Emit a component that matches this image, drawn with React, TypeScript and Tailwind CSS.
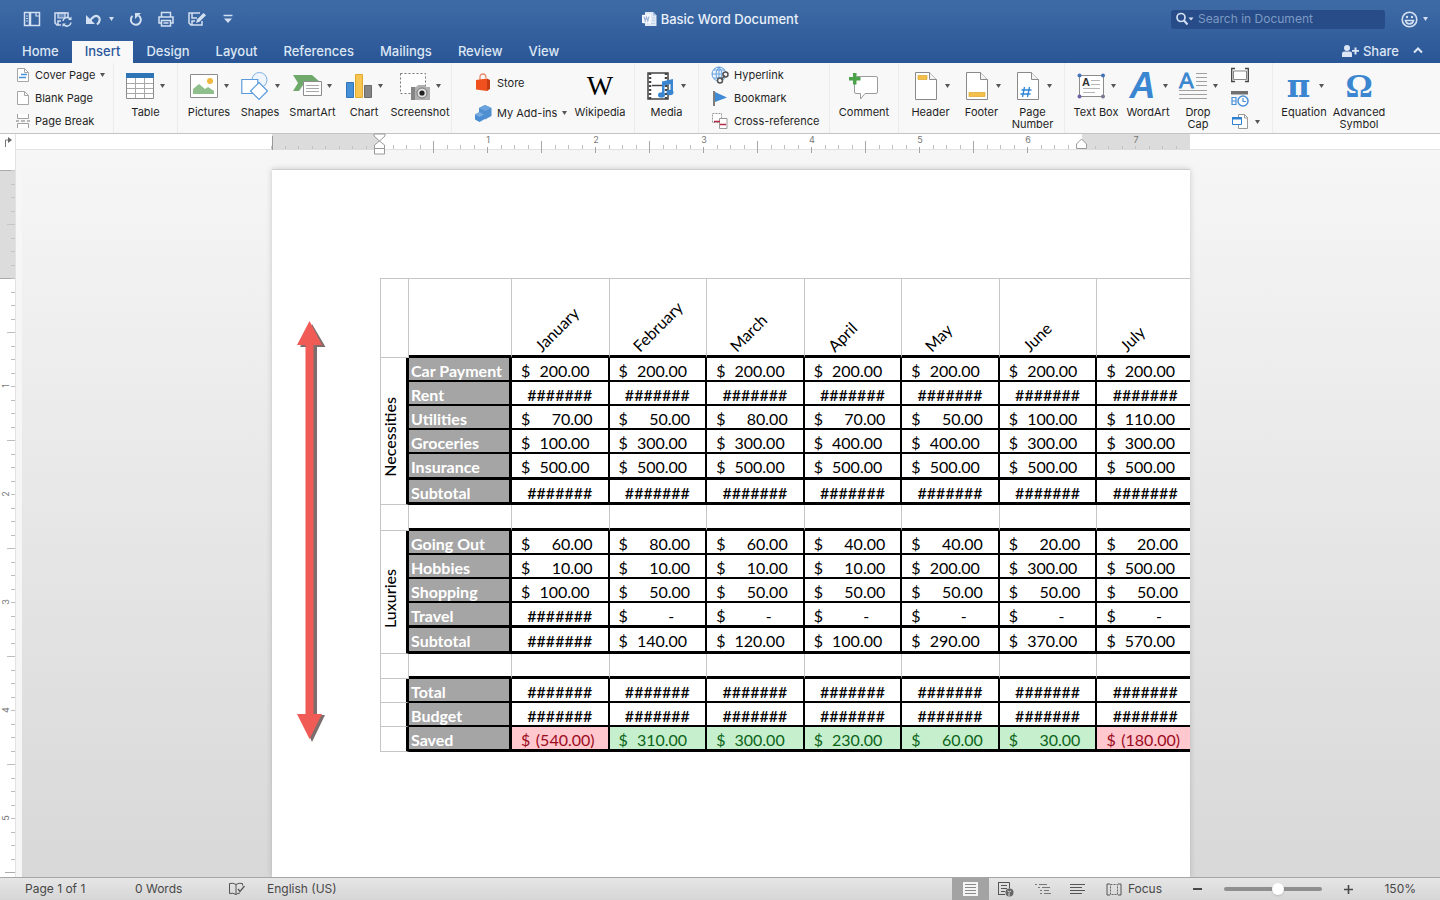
import React from "react";
import clsx from "clsx";

const MONTHS = ["January", "February", "March", "April", "May", "June", "July"];

type Kind = "item" | "last" | "subtotal" | "gap" | "saved";

interface Row {
  label: string;
  kind: Kind;
  values: string[];
  group?: string;
  span?: number;
  height: string;
}

const HASH = "#######";
const hashes = MONTHS.map(() => HASH);
const blanks = MONTHS.map(() => "");

const ROWS: Row[] = [
  { label: "Car Payment", kind: "item", group: "Necessities", span: 6, height: "h-[24px]", values: MONTHS.map(() => "200.00") },
  { label: "Rent", kind: "item", height: "h-[24px]", values: hashes },
  { label: "Utilities", kind: "item", height: "h-[24px]", values: ["70.00", "50.00", "80.00", "70.00", "50.00", "100.00", "110.00"] },
  { label: "Groceries", kind: "item", height: "h-[24px]", values: ["100.00", "300.00", "300.00", "400.00", "400.00", "300.00", "300.00"] },
  { label: "Insurance", kind: "last", height: "h-[26px]", values: MONTHS.map(() => "500.00") },
  { label: "Subtotal", kind: "subtotal", height: "h-[25px]", values: hashes },
  { label: "", kind: "gap", height: "h-[26px]", values: blanks },
  { label: "Going Out", kind: "item", group: "Luxuries", span: 5, height: "h-[24px]", values: ["60.00", "80.00", "60.00", "40.00", "40.00", "20.00", "20.00"] },
  { label: "Hobbies", kind: "item", height: "h-[24px]", values: ["10.00", "10.00", "10.00", "10.00", "200.00", "300.00", "500.00"] },
  { label: "Shopping", kind: "item", height: "h-[24px]", values: ["100.00", "50.00", "50.00", "50.00", "50.00", "50.00", "50.00"] },
  { label: "Travel", kind: "last", height: "h-[25px]", values: [HASH, "-", "-", "-", "-", "-", "-"] },
  { label: "Subtotal", kind: "subtotal", height: "h-[26px]", values: [HASH, "140.00", "120.00", "100.00", "290.00", "370.00", "570.00"] },
  { label: "", kind: "gap", height: "h-[25px]", values: blanks },
  { label: "Total", kind: "item", group: "", span: 1, height: "h-[24px]", values: hashes },
  { label: "Budget", kind: "item", group: "", span: 1, height: "h-[24px]", values: hashes },
  { label: "Saved", kind: "saved", group: "", span: 1, height: "h-[25px]", values: ["(540.00)", "310.00", "300.00", "230.00", "60.00", "30.00", "(180.00)"] },
];

const Caret = ({ className = "text-[#555]" }: { className?: string }) => (
  <svg width="5" height="4" viewBox="0 0 5 4" className={clsx("shrink-0", className)} aria-hidden="true">
    <path d="M0 0h5L2.5 4z" fill="currentColor" />
  </svg>
);

/* ---------- Title bar ---------- */

const QuickIcon = ({ label, width = 18, children }: { label: string; width?: number; children: React.ReactNode }) => (
  <button type="button" aria-label={label} className="flex h-5 items-center">
    <svg width={width} height="18" viewBox={`0 0 ${width} 18`} fill="none" stroke="currentColor" strokeWidth="1.5">
      {children}
    </svg>
  </button>
);

const TitleBar = () => (
  <div className="grid h-[38px] grid-cols-[1fr_auto_1fr] items-center">
    <div className="flex items-center pl-[23px] text-[#d3e0f2]">
      <QuickIcon label="Sidebar">
        <path d="M1.500 2.500h15v13h-15z" />
        <path d="M7 3v12" strokeWidth="2.500" />
        <path d="M3 6h2M3 8.500h2M3 11h2" strokeWidth="1.200" />
        <path d="M13 3v3h3" strokeWidth="1.200" />
      </QuickIcon>
      <div className="w-3" />
      <QuickIcon label="Save" width={20}>
        <path d="M8 15H4l-2-2V3h13v4" />
        <path d="M5 3h7v5H5z" fill="currentColor" fillOpacity=".35" strokeWidth="1.200" />
        <path d="M5 15v-4h3" />
        <path d="M10 11a4 4 0 0 1 7-2.200M18 12.500a4 4 0 0 1-7 2.200" />
        <path d="M18.500 6.500V10H15zM9.500 17v-3.500H13z" fill="currentColor" stroke="none" />
      </QuickIcon>
      <div className="w-3" />
      <QuickIcon label="Undo">
        <path d="M5 11c2-4 5.500-6 8-4.500s2.500 5-1 8" strokeWidth="2.200" />
        <path d="M1 5v9h9z" fill="currentColor" stroke="none" />
      </QuickIcon>
      <div className="w-[6px]" />
      <Caret className="text-[#d3e0f2]" />
      <div className="w-[12px]" />
      <QuickIcon label="Repeat">
        <path d="M6.500 6a5 5 0 1 0 6-.500" strokeWidth="2" />
        <path d="M9 9V3h6z" fill="currentColor" stroke="none" />
      </QuickIcon>
      <div className="w-[13px]" />
      <QuickIcon label="Print">
        <path d="M4.500 7V2.500h9V7M4.500 13H2V7h14v6h-2.500" />
        <path d="M4.500 10.500h9v5.500h-9z M6.500 13h5" />
      </QuickIcon>
      <div className="w-[12px]" />
      <QuickIcon label="Save a copy" width={20}>
        <path d="M15 11v4H4l-2-2V3h11M5 3v5h5M5 15v-4h3" />
        <path d="M9 13l1-3.500L16.500 3l2.500 2.200-6.500 6.600z" fill="currentColor" stroke="none" />
      </QuickIcon>
      <div className="w-[15px]" />
      <QuickIcon label="Customize" width={12}>
        <path d="M1.500 5.500h9" />
        <path d="M2 8.500h8L6 13z" fill="currentColor" stroke="none" />
      </QuickIcon>
    </div>

    <h1 className="flex items-center gap-1 text-[13px] leading-4 font-medium text-[#e9f0fa]">
      <svg width="15" height="16" viewBox="0 0 15 16" aria-hidden="true">
        <path d="M3 1h8l3.500 3.500V15H3z" fill="#dfe8f5" />
        <path d="M11 1v3.500h3.500z" fill="#a9bfdf" />
        <path d="M5 12.500h8M10 7h3M10 9.500h3" stroke="#c3d1e6" />
        <path d="M0 4l9-1v10l-9-1z" fill="#f5f8fd" />
        <path d="M2 5.500l1.200 4.500L4.500 6l1.300 4L7 5.500" fill="none" stroke="#9fb4d8" strokeWidth="1.100" />
      </svg>
      Basic Word Document
    </h1>

    <div className="flex items-center justify-end gap-4 pr-3 text-[#d3e0f2]">
      <label className="flex h-[19px] w-[214px] items-center gap-1 rounded-[3px] bg-[#274c87] pl-[5px]">
        <svg width="18" height="14" viewBox="0 0 18 14" fill="none" stroke="currentColor" strokeWidth="1.700" aria-hidden="true">
          <circle cx="5" cy="5.500" r="4" />
          <path d="M8 8.500l3.500 4" strokeWidth="2" />
          <path d="M12.500 5.500h5l-2.500 3z" fill="currentColor" stroke="none" />
        </svg>
        <input
          type="search"
          aria-label="Search in Document"
          placeholder="Search in Document"
          className="min-w-0 flex-1 bg-transparent text-[12px] leading-4 text-white outline-none placeholder:text-[#7d9ac4]"
        />
      </label>
      <button type="button" aria-label="Feedback" className="flex items-center gap-[5px]">
        <svg width="17" height="17" viewBox="0 0 17 17" fill="none" stroke="currentColor" strokeWidth="1.600">
          <circle cx="8.500" cy="8.500" r="7.300" />
          <path d="M4.500 9.500c1 4.500 7 4.500 8 0z" />
          <circle cx="6" cy="6" r="1.200" fill="currentColor" stroke="none" />
          <circle cx="11" cy="6" r="1.200" fill="currentColor" stroke="none" />
        </svg>
        <Caret className="text-[#d3e0f2]" />
      </button>
    </div>
  </div>
);

const TABS = ["Home", "Insert", "Design", "Layout", "References", "Mailings", "Review", "View"];

const TabBar = () => (
  <div className="flex h-[25px] items-end justify-between text-[13px] leading-5 text-[#dce6f4]">
    <nav className="flex pl-[9px]">
      {TABS.map((tab) => (
        <button
          key={tab}
          type="button"
          className={clsx(
            "h-[22px] px-[13px] pb-[2px] font-medium",
            tab === "Insert" && "bg-[#f8f8f8] text-[#2b579a]"
          )}
        >
          {tab}
        </button>
      ))}
    </nav>
    <div className="flex h-[25px] items-center gap-[14px] pr-[17px]">
      <button type="button" className="flex items-center gap-1 font-medium">
        <svg width="17" height="14" viewBox="0 0 17 14" fill="currentColor" aria-hidden="true">
          <circle cx="5" cy="4" r="3" />
          <path d="M0 13V9.500q0-2 2-2h6q2 0 2 2V13z" />
          <path d="M10 6h2.500V3.500h2V6H17v1.800h-2.500v2.700h-2V7.800H10z" />
        </svg>
        Share
      </button>
      <button type="button" aria-label="Collapse ribbon">
        <svg width="10" height="7" viewBox="0 0 10 7" fill="none" stroke="currentColor" strokeWidth="2">
          <path d="M1 5.500l4-4 4 4" />
        </svg>
      </button>
    </div>
  </div>
);

/* ---------- Ribbon ---------- */

interface ToolProps {
  label: string;
  icon: React.ReactNode;
  width: string;
  caret?: boolean;
}

const Tool = ({ label, icon, width, caret }: ToolProps) => (
  <button type="button" className={clsx("flex shrink-0 flex-col items-center pt-[9px]", width)}>
    <span className="flex h-7 items-center gap-[6px]">
      {icon}
      {caret && <Caret />}
    </span>
    <span className="mt-[6px] text-center text-[11px] leading-3">{label}</span>
  </button>
);

const SmallTool = ({ label, icon, caret }: Omit<ToolProps, "width">) => (
  <button type="button" className="flex h-[23px] items-center gap-[5px] text-[11px] leading-3 whitespace-nowrap">
    {icon}
    <span>{label}</span>
    {caret && <Caret />}
  </button>
);

const Group = ({ className, children }: { className: string; children: React.ReactNode }) => (
  <div className={clsx("flex h-full shrink-0 border-r border-[#ececec]", className)}>{children}</div>
);

const Icon = ({ w = 28, h = 28, children }: { w?: number; h?: number; children: React.ReactNode }) => (
  <svg width={w} height={h} viewBox={`0 0 ${w} ${h}`} fill="none" className="shrink-0 overflow-visible" aria-hidden="true">
    {children}
  </svg>
);

const SheetOutline = () => (
  <>
    <path d="M4.500.500h14l7 7v20h-21z" fill="#fff" stroke="#8a8a8a" />
    <path d="M18.500.500v7h7" fill="#f3f3f3" stroke="#8a8a8a" />
  </>
);

const icons = {
  cover: (
    <Icon w={14} h={16}>
      <path d="M1.500 1.500h7l4 4v9h-11z" fill="#fff" stroke="#a5a5a5" />
      <path d="M8.500 1.500v4h4" stroke="#a5a5a5" />
      <path d="M5 7.500h6M3 10.500h7" stroke="#4a90d9" strokeWidth="1.500" />
    </Icon>
  ),
  blank: (
    <Icon w={14} h={16}>
      <path d="M1.500 1.500h7l4 4v9h-11z" fill="#fff" stroke="#a5a5a5" />
      <path d="M8.500 1.500v4h4" stroke="#a5a5a5" />
    </Icon>
  ),
  pageBreak: (
    <Icon w={14} h={16}>
      <path d="M1.500 1v4.500h11V1M1.500 15v-4.500h11V15" fill="#fff" stroke="#a0a0a0" />
      <path d="M0 8h3M5 8h4M11 8h3" stroke="#777" />
    </Icon>
  ),
  table: (
    <Icon>
      <path d="M.500 1.500h27v25H.500z" fill="#fff" stroke="#8c8c8c" />
      <path d="M0 1h28v5H0z" fill="#2e75b6" />
      <path d="M1 11.500h26M1 16.500h26M1 21.500h26M9.500 6v20M18.500 6v20" stroke="#a8a8a8" />
    </Icon>
  ),
  pictures: (
    <Icon>
      <path d="M.500 2.500h27v23H.500z" fill="#fff" stroke="#8c8c8c" />
      <circle cx="20" cy="9" r="3" fill="#efb73e" />
      <path d="M3 22v-5l6-5 6 5 3-2 6 4v3z" fill="#8fc08c" />
    </Icon>
  ),
  shapes: (
    <Icon>
      <circle cx="18.500" cy="8" r="7.500" fill="#eef5fc" stroke="#7fb0e2" />
      <path d="M.800 7.500h16v14h-16z" fill="#fff" stroke="#5b9bdb" strokeWidth="1.200" />
      <path d="M18 10.500l8.500 8.500-8.500 8.500L9.500 19z" fill="#fff" stroke="#5b9bdb" strokeWidth="1.200" />
    </Icon>
  ),
  smartArt: (
    <Icon>
      <path d="M0 3h19l8 7H12L6 19H0l5-8z" fill="#6fa96c" />
      <path d="M10.500 9.500h18v14h-18z" fill="#fff" stroke="#8c8c8c" />
      <path d="M13 13.500h13M13 16.500h13M13 19.500h13" stroke="#a8a8a8" />
    </Icon>
  ),
  chart: (
    <Icon w={26}>
      <path d="M.500 10.500h7v15h-7z" fill="#4590d6" stroke="#2f74b8" />
      <path d="M9.500 2.500h7v23h-7z" fill="#f8c650" stroke="#e0aa2e" />
      <path d="M18.500 13.500h7v12h-7z" fill="#858585" stroke="#6a6a6a" />
    </Icon>
  ),
  screenshot: (
    <Icon w={30}>
      <path d="M.500 1.500h25v20H.500z" fill="#fff" stroke="#777" strokeDasharray="2 2" />
      <path d="M11 15h5l2-2h7l1 2h4v13H11z" fill="#b0b0b0" />
      <path d="M11 15h4v13h-4z" fill="#858585" />
      <circle cx="22" cy="21" r="5" fill="#e2e2e2" stroke="#777" />
      <circle cx="22" cy="21" r="2.600" fill="#222" />
    </Icon>
  ),
  store: (
    <Icon w={17} h={19}>
      <path d="M5 7V4q0-3 3-3t3 4" stroke="#e8896b" strokeWidth="1.300" />
      <path d="M1 7l11-1.500V18L1 16.500z" fill="#f0501e" />
      <path d="M12 5.500l3 1.500v9l-3 2z" fill="#c63c10" />
    </Icon>
  ),
  addins: (
    <Icon w={17} h={18}>
      <path d="M10 1l6.500 3v8L10 15.500 4 12V4z" fill="#4f8fd0" />
      <path d="M10 1l6.500 3L10 7 4 4z" fill="#6ba3dc" />
      <path d="M4.500 8L9 10.500v5L4.500 18 0 15.500v-5z" fill="#4a8dd2" />
      <path d="M4.500 8L9 10.500 4.500 13 0 10.500z" fill="#78ace0" />
    </Icon>
  ),
  media: (
    <Icon>
      <path d="M1 1h20v26H1z" fill="#fff" stroke="#444" strokeWidth="1.500" />
      <path d="M3 1v26M19 1v26" stroke="#444" strokeWidth="2.500" strokeDasharray="2 2" />
      <path d="M5 13.500h12" stroke="#444" strokeWidth="1.500" />
      <path d="M15 9.500l11-2.500v14h-2.500v-9l-6 1.500V23H15z" fill="#3a86d0" />
      <ellipse cx="14.500" cy="23" rx="3.500" ry="2.700" fill="#3a86d0" />
      <ellipse cx="23" cy="20.500" rx="3.500" ry="2.700" fill="#3a86d0" />
    </Icon>
  ),
  hyperlink: (
    <Icon w={18} h={18}>
      <circle cx="8" cy="8" r="7" fill="#eaf3fc" stroke="#5b9bdb" />
      <path d="M1 8h14M8 1v14M3 4h10M3 12h7M8 1q-6 7 0 14M8 1q6 7 0 14" stroke="#5b9bdb" strokeWidth=".900" />
      <circle cx="9" cy="14.500" r="2.500" fill="#f8f8f8" stroke="#555" strokeWidth="1.500" />
      <circle cx="14.500" cy="8.500" r="2.500" fill="#f8f8f8" stroke="#555" strokeWidth="1.500" />
      <path d="M10 13.500l4-4" stroke="#555" strokeWidth="1.500" />
    </Icon>
  ),
  bookmark: (
    <Icon w={18} h={16}>
      <path d="M3 1v15" stroke="#555" strokeWidth="1.500" />
      <path d="M4 2l12 5.500L4 12z" fill="#3f8ad4" />
    </Icon>
  ),
  crossRef: (
    <Icon w={18} h={16}>
      <path d="M1.500.500h9v9h-9z" stroke="#999" strokeDasharray="2 1" fill="#fff" />
      <path d="M8.500 5.500h7.500v10H8.500z" stroke="#999" fill="#fff" />
      <path d="M3 8.500h6M9 11.500h6" stroke="#b52a48" strokeWidth="1.500" />
    </Icon>
  ),
  comment: (
    <Icon w={30}>
      <path d="M7.500 4.500H27q1.500 0 1.500 1.500v14q0 1.500-1.500 1.500H16L11.500 27v-5.500H7q-1.500 0-1.500-1.500V6q0-1.500 2-1.500z" fill="#fff" stroke="#9b9b9b" />
      <path d="M4 1h3.500v4h4v3.500h-4v4H4v-4H0V5h4z" fill="#4ba24a" />
    </Icon>
  ),
  header: (
    <Icon>
      <SheetOutline />
      <path d="M7 3.500h9v4H7z" fill="#f5c04a" stroke="#dba52b" strokeWidth=".700" />
    </Icon>
  ),
  footer: (
    <Icon>
      <SheetOutline />
      <path d="M7 20.500h16v4H7z" fill="#f5c04a" stroke="#dba52b" strokeWidth=".700" />
    </Icon>
  ),
  pageNumber: (
    <Icon>
      <SheetOutline />
      <path d="M11.500 15l-2 10M16.500 15l-2 10M8.500 18h10M7.500 22h10" stroke="#2f86d6" strokeWidth="1.300" />
    </Icon>
  ),
  textBox: (
    <Icon>
      <path d="M2.500 3.500h24v21h-24z" fill="#fff" stroke="#8c8c8c" />
      <path d="M14 8.500h9M14 12.500h9M6 16.500h17M6 20.500h12" stroke="#b5b5b5" />
      <text x="5" y="14" fontFamily="Liberation Sans" fontSize="11" fontWeight="700" fill="#333">A</text>
      <circle cx="2.500" cy="3.500" r="2" fill="#4472b8" />
      <circle cx="26" cy="3.500" r="2" fill="#4472b8" />
      <circle cx="2.500" cy="24.500" r="2" fill="#7060a8" />
      <circle cx="26" cy="24.500" r="2" fill="#7a7a90" />
    </Icon>
  ),
  reading: (
    <Icon w={18} h={14}>
      <path d="M4 .500H.700v13H4M14 .500h3.300v13H14" stroke="#444" strokeWidth="1.300" />
      <path d="M2.500 3h13v8.500h-13z" fill="#fff" stroke="#888" />
    </Icon>
  ),
  dateTime: (
    <Icon w={18} h={16}>
      <path d="M0 0h17v3.500H0z" fill="#707070" />
      <path d="M1 6.500h4v7H1z" stroke="#4a90d9" strokeWidth="1.200" />
      <path d="M1 10h4" stroke="#4a90d9" />
      <circle cx="12" cy="10" r="5" fill="#fff" stroke="#4a90d9" strokeWidth="1.500" />
      <path d="M12 7v3.500h3" stroke="#4a90d9" strokeWidth="1.200" />
    </Icon>
  ),
  object: (
    <Icon w={18} h={16}>
      <path d="M7.500.500h6l3 3v11h-9z" fill="#fff" stroke="#999" />
      <path d="M13.500.500v3.500h3.500" stroke="#999" />
      <path d="M1.500 3.500h9v7h-9z" fill="#fff" stroke="#2f80d0" />
      <path d="M1 3h10v2.500H1z" fill="#2f80d0" />
    </Icon>
  ),
};

const Glyph = ({ className, children }: { className: string; children: React.ReactNode }) => (
  <span aria-hidden="true" className={clsx("flex h-7 items-center justify-center", className)}>
    {children}
  </span>
);

const Ribbon = () => (
  <div className="flex h-[71px] shrink-0 overflow-hidden border-b border-[#c4c4c4] bg-[#f8f8f8] text-[#1f1f1f]">
    <Group className="w-[114px] flex-col pl-4">
      <SmallTool label="Cover Page" icon={icons.cover} caret />
      <SmallTool label="Blank Page" icon={icons.blank} />
      <SmallTool label="Page Break" icon={icons.pageBreak} />
    </Group>
    <Group className="w-[64px]">
      <Tool label="Table" icon={icons.table} width="w-[63px]" caret />
    </Group>
    <Group className="w-[274px] pl-[5px]">
      <Tool label="Pictures" icon={icons.pictures} width="w-[52px]" caret />
      <Tool label="Shapes" icon={icons.shapes} width="w-[50px]" caret />
      <Tool label="SmartArt" icon={icons.smartArt} width="w-[55px]" caret />
      <Tool label="Chart" icon={icons.chart} width="w-[48px]" caret />
      <Tool label="Screenshot" icon={icons.screenshot} width="w-[64px]" caret />
    </Group>
    <Group className="w-[183px] pl-[23px]">
      <div className="flex w-[97px] flex-col gap-[7px] pt-2">
        <SmallTool label="Store" icon={icons.store} />
        <SmallTool label="My Add-ins" icon={icons.addins} caret />
      </div>
      <Tool
        label="Wikipedia"
        icon={<Glyph className="font-['Liberation_Serif'] text-[28px] leading-7 text-black">W</Glyph>}
        width="w-[56px]"
      />
    </Group>
    <Group className="w-[64px]">
      <Tool label="Media" icon={icons.media} width="w-[63px]" caret />
    </Group>
    <Group className="w-[131px] flex-col pl-3">
      <SmallTool label="Hyperlink" icon={icons.hyperlink} />
      <SmallTool label="Bookmark" icon={icons.bookmark} />
      <SmallTool label="Cross-reference" icon={icons.crossRef} />
    </Group>
    <Group className="w-[69px]">
      <Tool label="Comment" icon={icons.comment} width="w-[68px]" />
    </Group>
    <Group className="w-[166px] pl-[6px]">
      <Tool label="Header" icon={icons.header} width="w-[51px]" caret />
      <Tool label="Footer" icon={icons.footer} width="w-[51px]" caret />
      <Tool label="Page Number" icon={icons.pageNumber} width="w-[51px]" caret />
    </Group>
    <Group className="w-[208px] pl-[5px]">
      <Tool label="Text Box" icon={icons.textBox} width="w-[52px]" caret />
      <Tool
        label="WordArt"
        icon={<Glyph className="w-7 font-['Liberation_Sans'] text-[36px] leading-7 font-bold text-[#3a86d0] italic">A</Glyph>}
        width="w-[52px]"
        caret
      />
      <Tool
        label="Drop Cap"
        icon={
          <Icon>
            <path d="M17 1.500h11M17 5.500h11M17 9.500h11M17 13.500h11M0 18.500h28M0 22.500h28M0 26.500h28" stroke="#a0a0a0" />
            <text x="0" y="16" fontFamily="Liberation Sans" fontSize="22" fill="#3a86d0" stroke="#3a86d0" strokeWidth=".8">A</text>
          </Icon>
        }
        width="w-[48px]"
        caret
      />
      <div className="flex flex-col pl-[9px]">
        <button type="button" aria-label="Text from file" className="flex h-6 items-center">{icons.reading}</button>
        <button type="button" aria-label="Date and time" className="flex h-6 items-center">{icons.dateTime}</button>
        <button type="button" aria-label="Object" className="flex h-[21px] items-center gap-[6px]">
          {icons.object}
          <Caret />
        </button>
      </div>
    </Group>
    <div className="flex pl-[5px]">
      <Tool
        label="Equation"
        icon={<Glyph className="w-7 font-['DejaVu_Serif'] text-[32px] leading-7 font-bold text-[#3a86d0]">π</Glyph>}
        width="w-[52px]"
        caret
      />
      <Tool
        label="Advanced Symbol"
        icon={<Glyph className="font-['Liberation_Serif'] text-[34px] leading-7 font-bold text-[#3a86d0]">Ω</Glyph>}
        width="w-[58px]"
      />
    </div>
  </div>
);

/* ---------- Rulers ---------- */

const INCH = 108;
const STEP = INCH / 8;

const HorizontalRuler = () => {
  const ticks = Array.from({ length: 68 }, (_, i) => i - 8).filter((i) => INCH + i * STEP < 918);
  return (
    <div className="flex h-4 shrink-0 bg-white text-[#777]">
      <div className="flex w-4 shrink-0 items-center justify-center border-r border-[#e2e2e2]">
        <svg width="8" height="10" viewBox="0 0 8 10" fill="none" aria-hidden="true">
          <path d="M1.500 10V3H5" stroke="#777" />
          <path d="M4 0l4 3-4 3z" fill="#666" />
        </svg>
      </div>
      <div className="flex min-w-0 flex-1 justify-center border-b border-[#e2e2e2] pl-[6px]">
        <svg width="918" height="16" viewBox="0 0 918 16" className="relative z-10 shrink-0 overflow-visible" aria-hidden="true">
          <path d="M0 0h108v16H0zM810 0h108v16H810z" fill="#dcdcdc" />
          <path d="M.5 2v14" stroke="#999" />
          {ticks.map((i) => {
            const x = Math.round(INCH + i * STEP) - 0.5;
            const inside = i > 0 && x < 809;
            const top = i % 8 === 0 ? 13 : i % 4 === 0 ? 7 : 11;
            if (!inside) return <path key={i} d={`M${x} 12v3`} stroke="#c2c2c2" />;
            return <path key={i} d={`M${x} ${top}V${i % 4 === 0 ? 19 : 15}`} stroke={i % 4 === 0 ? "#a5a5a5" : "#c0c0c0"} />;
          })}
          {[1, 2, 3, 4, 5, 6, 7].map((n) => (
            <text key={n} x={INCH + n * INCH} y="9" textAnchor="middle" fontFamily="Inter" fontSize="9" fill="#777">
              {n}
            </text>
          ))}
          <path d="M102 0h11v2l-5.500 5 5 4v9h-10v-9l5-4-5.500-5z" fill="#fff" stroke="#999" />
          <path d="M102.500 14.500h10" stroke="#999" />
          <path d="M809.500 5l5 5v4.500h-10V10z" fill="#fff" stroke="#999" />
        </svg>
      </div>
    </div>
  );
};

const VerticalRuler = () => {
  const ticks = Array.from({ length: 52 }, (_, i) => i - 8);
  return (
    <div className="w-4 shrink-0 overflow-hidden border-r border-[#e2e2e2] bg-white">
      <svg width="15" height="723" viewBox="0 0 15 723" aria-hidden="true">
        <path d="M0 20h15v108H0z" fill="#dcdcdc" />
        <path d="M0 20.500h15M0 128.500h15M5 722.500h10" stroke="#aaa" />
        {ticks.map((i) => {
          const y = Math.round(128 + i * STEP) + 0.5;
          return <path key={i} d={`M${i % 8 !== 0 && i % 4 === 0 ? 7 : 11} ${y}h8`} stroke={i < 0 ? "#c6c6c6" : "#bdbdbd"} />;
        })}
        {[1, 2, 3, 4, 5].map((n) => (
          <text
            key={n}
            transform={`translate(9 ${128 + n * INCH}) rotate(-90)`}
            textAnchor="middle"
            fontFamily="Inter"
            fontSize="9"
            fill="#777"
          >
            {n}
          </text>
        ))}
      </svg>
    </div>
  );
};

/* ---------- Budget table ---------- */

const Amount = ({ value }: { value: string }) => {
  if (!value) return null;
  if (value === HASH) return <div className="text-center font-medium">{value}</div>;
  return (
    <div
      className={clsx(
        "flex justify-between pl-[9px]",
        value === "-" ? "pr-[31px]" : value.startsWith("(") ? "pr-[13px]" : value.length > 5 ? "pr-[18px]" : "pr-[15px]"
      )}
    >
      <span>$</span>
      <span>{value}</span>
    </div>
  );
};

const BudgetTable = () => (
  <table className="w-[815px] table-fixed border-separate border-spacing-0 border-l border-[#c6c6c6] font-['Lato'] text-[16px] leading-[18px] text-black">
    <colgroup>
      <col className="w-[28px]" />
      <col className="w-[103px]" />
      {MONTHS.map((m) => (
        <col key={m} />
      ))}
    </colgroup>
    <thead>
      <tr className="h-[80px]">
        <td className="border-t border-r border-b border-[#c6c6c6]" />
        <td className="border-t border-r border-b-3 border-[#c6c6c6] border-b-black" />
        {MONTHS.map((m) => (
          <th key={m} scope="col" className="relative border-t border-r border-b-3 border-[#c6c6c6] border-b-black p-0 font-normal">
            <span className="absolute bottom-0 left-[32px] origin-bottom-left -rotate-45">{m}</span>
          </th>
        ))}
      </tr>
    </thead>
    <tbody>
      {ROWS.map((row, r) => {
        const gap = row.kind === "gap";
        const thick = row.kind !== "item";
        return (
          <tr key={r} className={row.height}>
            {(row.span || gap) && (
              <th
                scope="rowgroup"
                rowSpan={row.span ?? 1}
                className={clsx("border-b border-b-[#c6c6c6] p-0 font-medium", gap ? "border-r border-r-[#c6c6c6]" : "border-r-3 border-r-black")}
              >
                {row.group && (
                  <span className="mx-auto block rotate-180 pb-3 [writing-mode:vertical-rl]">
                    {row.group}
                  </span>
                )}
              </th>
            )}
            <th
              scope="row"
              className={clsx(
                "border-black p-0 text-left font-bold whitespace-nowrap text-white",
                thick ? "border-b-3" : "border-b-2",
                gap ? "border-r border-r-[#c6c6c6]" : "border-r-3 bg-[#a5a5a5] pt-[3px] pl-[2px]"
              )}
            >
              {row.label}
            </th>
            {row.values.map((value, c) => (
              <td
                key={c}
                className={clsx(
                  "border-black p-0",
                  thick ? "border-b-3" : "border-b-2",
                  gap ? "border-r border-r-[#c6c6c6]" : "border-r-2 pt-[3px]",
                  row.kind === "saved" && (value.startsWith("(") ? "bg-[#ffc7ce] text-[#9c0a1c]" : "bg-[#c6efce] text-[#0c6418]")
                )}
              >
                <Amount value={value} />
              </td>
            ))}
          </tr>
        );
      })}
    </tbody>
  </table>
);

const Page = () => (
  <article className="relative mt-[19px] w-[918px] shrink-0 overflow-hidden border-t border-[#cfcfcf] bg-white pt-[108px] pl-[108px] shadow-[0_0_6px_rgba(0,0,0,0.18)]">
    <svg width="34" height="426" viewBox="0 0 34 426" className="absolute top-[150px] left-[23px]" aria-hidden="true">
      <path d="M17 4l13.500 23H22v368h8L17 422 5 396h8V27H5z" fill="#7d6d6d" />
      <path d="M14.500 1L27 25h-8.500v369H27L14.500 419 2 394h8.500V25H2z" fill="#f15b56" />
    </svg>
    <BudgetTable />
  </article>
);

/* ---------- Status bar ---------- */

const StatusBar = () => (
  <footer className="flex h-[23px] shrink-0 items-center justify-between border-t border-[#a6a6a6] bg-linear-to-b from-[#e6e6e6] to-[#d6d6d6] text-[12px] leading-4 text-[#484848]">
    <div className="flex items-center pl-[25px]">
      <span className="w-[110px]">Page 1 of 1</span>
      <span className="w-[93px]">0 Words</span>
      <button type="button" aria-label="Spelling" className="w-[39px]">
        <Icon w={18} h={16}>
          <path d="M8 3.500Q5 1.500 1.500 2.500v10q3.500-1 6.500 1 2-1.500 4-1.500M8 3.500v10M8 3.500q3-2 6.500-1v2" stroke="#555" />
          <path d="M10 8l2 2.500 4.500-5.500" stroke="#555" strokeWidth="1.300" />
        </Icon>
      </button>
      <button type="button">English (US)</button>
    </div>
    <div className="flex h-full items-center">
      <button type="button" aria-label="Print layout" className="flex h-full w-[37px] items-center justify-center bg-[#a3a3a3]">
        <Icon w={15} h={14}>
          <path d="M0 0h15v14H0z" fill="#f4f4f4" />
          <path d="M2 2.500h11M2 5.500h11M2 8.500h11M2 11.500h11" stroke="#8a8a8a" />
        </Icon>
      </button>
      <button type="button" aria-label="Web layout" className="flex w-[34px] justify-center">
        <Icon w={16} h={15}>
          <path d="M.500 0v12M.500.500h11v6M3 3.500h6M3 6.500h6M3 9.500h4M0 12.500h7" stroke="#555" />
          <circle cx="11.500" cy="10.500" r="4" fill="#666" />
          <path d="M9.500 9q2 2 3.500 0M11 14v-3" stroke="#ddd" />
        </Icon>
      </button>
      <button type="button" aria-label="Outline" className="flex w-[40px] justify-center">
        <Icon w={16} h={13}>
          <path d="M0 1.500h2M4 1.500h8M3 4.500h2M7 4.500h8M5 7.500h2M9 7.500h5M5 10.500h2M9 10.500h7" stroke="#777" />
        </Icon>
      </button>
      <button type="button" aria-label="Draft" className="flex w-[30px] justify-center">
        <Icon w={15} h={12}>
          <path d="M0 1.500h15M0 4.500h12M0 7.500h15M0 10.500h12" stroke="#555" />
        </Icon>
      </button>
      <button type="button" className="ml-[13px] flex items-center gap-[6px]">
        <Icon w={16} h={13}>
          <path d="M4 1H1v11h3M12 1h3v11h-3" stroke="#555" />
          <path d="M4.500 1.500h7v10h-7z" stroke="#666" strokeDasharray="2 1" />
        </Icon>
        Focus
      </button>
      <button type="button" aria-label="Zoom out" className="ml-[31px] h-[2px] w-[9px] bg-[#484848]" />
      <input
        type="range"
        aria-label="Zoom"
        min={0}
        max={100}
        defaultValue={56}
        className="ml-[22px] h-1 w-[98px] appearance-none rounded-full bg-[#8f8f8f] [&::-webkit-slider-thumb]:size-3 [&::-webkit-slider-thumb]:appearance-none [&::-webkit-slider-thumb]:rounded-full [&::-webkit-slider-thumb]:bg-white [&::-webkit-slider-thumb]:shadow-sm"
      />
      <button type="button" aria-label="Zoom in" className="ml-[22px]">
        <Icon w={9} h={9}>
          <path d="M0 4.500h9M4.500 0v9" stroke="#484848" strokeWidth="1.600" />
        </Icon>
      </button>
      <span className="w-[87px] pr-[24px] text-right">150%</span>
    </div>
  </footer>
);

const App: React.FC = () => {
  return (
    <div className="flex h-screen flex-col overflow-hidden bg-white font-['Inter',sans-serif]">
      <header className="shrink-0 bg-linear-to-b from-[#3f6ba5] to-[#2a5697]">
        <TitleBar />
        <TabBar />
      </header>
      <Ribbon />
      <HorizontalRuler />
      <div className="flex min-h-0 flex-1">
        <VerticalRuler />
        <div className="w-[6px] shrink-0 bg-[#f6f6f6]" />
        <main className="flex min-w-0 flex-1 justify-center overflow-hidden bg-linear-to-b from-[#f6f6f6] to-[#d8d8d8]">
          <Page />
        </main>
      </div>
      <StatusBar />
    </div>
  );
};

export default App;
